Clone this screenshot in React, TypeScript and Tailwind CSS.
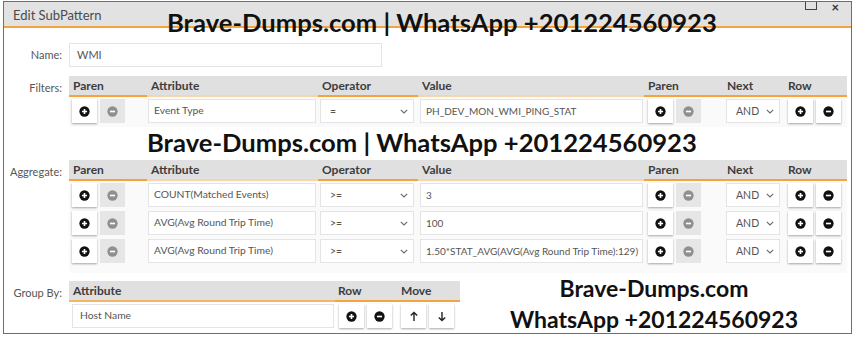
import React from "react";

const ui = { fontFamily: "Lato, 'Noto Sans', sans-serif" };
const wm = { fontFamily: "Lato, 'Open Sans', sans-serif" };

function PlusIcon({ color = "#111" }: { color?: string }) {
  return (
    <svg width="11" height="11" viewBox="0 0 12 12">
      <circle cx="6" cy="6" r="5.6" fill={color} />
      <path d="M6 3.2v5.6M3.2 6h5.6" stroke="#fff" strokeWidth="1.8" />
    </svg>
  );
}
function MinusIcon({ color = "#111" }: { color?: string }) {
  return (
    <svg width="11" height="11" viewBox="0 0 12 12">
      <circle cx="6" cy="6" r="5.6" fill={color} />
      <path d="M3.2 6h5.6" stroke="#fff" strokeWidth="1.8" />
    </svg>
  );
}
function ArrowIcon({ up }: { up: boolean }) {
  return (
    <svg width="10" height="11" viewBox="0 0 10 11">
      {up ? (
        <path d="M5 10V1.5M1.8 4.6L5 1.4l3.2 3.2" stroke="#222" strokeWidth="1.4" fill="none" />
      ) : (
        <path d="M5 1v8.5M1.8 6.4L5 9.6l3.2-3.2" stroke="#222" strokeWidth="1.4" fill="none" />
      )}
    </svg>
  );
}
function Chevron() {
  return (
    <svg width="8" height="5" viewBox="0 0 8 5">
      <path d="M0.8 0.8L4 4l3.2-3.2" stroke="#666" strokeWidth="1.1" fill="none" />
    </svg>
  );
}

function Btn({ children, disabled }: { children: React.ReactNode; disabled?: boolean }) {
  return (
    <div
      className={
        disabled
          ? "w-[25px] h-[24px] flex items-center justify-center bg-[#e6e6e6]"
          : "w-[25px] h-[24px] flex items-center justify-center bg-white shadow-[0_1px_2px_rgba(0,0,0,0.35)]"
      }
    >
      {children}
    </div>
  );
}

function Input({ text, className = "" }: { text: string; className?: string }) {
  return (
    <div
      className={
        "h-[24px] bg-white border border-[#e4e4e4] flex items-center pl-[5px] text-[10.3px] text-[#555] whitespace-nowrap overflow-hidden " +
        className
      }
    >
      {text}
    </div>
  );
}

function Select({ text, className = "" }: { text: string; className?: string }) {
  return (
    <div
      className={
        "h-[24px] bg-white border border-[#e4e4e4] flex items-center justify-between pl-[9px] pr-[5px] text-[10.5px] text-[#555] " +
        className
      }
    >
      <span className="leading-[22px]">{text}</span>
      <Chevron />
    </div>
  );
}

const cols = "grid grid-cols-[78px_171px_100px_226px_79px_61px_63px]";

function HeaderRow({ names }: { names: string[] }) {
  const strong = [true, false, true, false, true, true, true];
  return (
    <div className={cols + " h-[21px] bg-[#e0e0e0]"}>
      {names.map((n, i) => (
        <div
          key={i}
          className={
            "flex items-center pl-[4px] text-[12px] font-bold text-[#3d3d3d] border-b-2 " +
            (strong[i] ? "border-[#f4a43a]" : "border-[#f3d6ad]")
          }
        >
          {n}
        </div>
      ))}
    </div>
  );
}

function DataRow({ attr, op, val }: { attr: string; op: string; val: string }) {
  return (
    <div className={cols + " h-[24px]"}>
      <div className="flex gap-[3px] pl-[3px]">
        <Btn><PlusIcon /></Btn>
        <Btn disabled><MinusIcon color="#8f8f8f" /></Btn>
      </div>
      <div className="pl-[1px] pr-[2px]"><Input text={attr} /></div>
      <div className="pl-[2px] pr-[4px]"><Select text={op} /></div>
      <div className="pl-[2px] pr-[1px]"><Input text={val} className="pl-[4px] text-[10px]" /></div>
      <div className="flex gap-[3px] pl-[4px]">
        <Btn><PlusIcon /></Btn>
        <Btn disabled><MinusIcon color="#8f8f8f" /></Btn>
      </div>
      <div className="pl-[3px] pr-[4px]"><Select text="AND" /></div>
      <div className="flex gap-[3px] pl-[4px]">
        <Btn><PlusIcon /></Btn>
        <Btn><MinusIcon /></Btn>
      </div>
    </div>
  );
}

function Label({ text, className = "" }: { text: string; className?: string }) {
  return (
    <div className={"w-[65px] shrink-0 text-right pr-[7px] text-[11px] text-[#555] " + className}>{text}</div>
  );
}

const headers = ["Paren", "Attribute", "Operator", "Value", "Paren", "Next", "Row"];

export default function App() {
  return (
    <div className="w-[854px] h-[338px] bg-white relative overflow-hidden" style={ui}>
      <div className="absolute left-[3px] top-[1px] w-[849px] h-[333px] border border-[#6e6e6e] flex flex-col">
        {/* title bar */}
        <div className="h-[26px] shrink-0 bg-[#e2e2e2] border-b-2 border-[#f4a43a] flex items-start justify-between pl-[9px] pr-[12px]">
          <span className="text-[13px] text-[#4a4a4a] mt-[4px]">Edit SubPattern</span>
          <div className="flex items-start gap-[14px]">
            <div className="w-[12px] h-[8px] border-[1.5px] border-t-0 border-[#444]"></div>
            <span className="text-[13px] font-bold text-[#333] leading-[10px]">×</span>
          </div>
        </div>

        {/* Name */}
        <div className="flex items-center mt-[15px]">
          <Label text="Name:" />
          <Input text="WMI" className="w-[313px] pl-[7px] text-[11px]" />
        </div>

        {/* Filters */}
        <div className="flex mt-[9px]">
          <Label text="Filters:" className="pt-[4px]" />
          <div className="w-[778px] bg-[#fafafa]">
            <HeaderRow names={headers} />
            <div className="pt-[2px] pb-[4px] flex flex-col gap-[4px] bg-[#fafafa]">
              <DataRow attr="Event Type" op="=" val="PH_DEV_MON_WMI_PING_STAT" />
            </div>
            <div className="h-[29px] bg-white"></div>
          </div>
        </div>

        {/* Aggregate */}
        <div className="flex mt-[4px]">
          <Label text="Aggregate:" className="pt-[4px]" />
          <div className="w-[778px] bg-[#fafafa]">
            <HeaderRow names={headers} />
            <div className="pt-[2px] pb-[10px] flex flex-col gap-[4px]">
              <DataRow attr="COUNT(Matched Events)" op=">=" val="3" />
              <DataRow attr="AVG(Avg Round Trip Time)" op=">=" val="100" />
              <DataRow attr="AVG(Avg Round Trip Time)" op=">=" val="1.50*STAT_AVG(AVG(Avg Round Trip Time):129)" />
            </div>
          </div>
        </div>

        {/* Group By */}
        <div className="flex mt-[8px]">
          <Label text="Group By:" className="pt-[4px]" />
          <div className="w-[391px]">
            <div className="grid grid-cols-[266px_65px_60px] h-[21px] bg-[#e0e0e0]">
              <div className="flex items-center pl-[4px] text-[12px] font-bold text-[#3d3d3d] border-b-2 border-[#f4b566]">Attribute</div>
              <div className="flex items-center pl-[3px] text-[12px] font-bold text-[#3d3d3d] border-b-2 border-[#f4a43a]">Row</div>
              <div className="flex items-center pl-[1px] text-[12px] font-bold text-[#3d3d3d] border-b-2 border-[#f4a43a]">Move</div>
            </div>
            <div className="grid grid-cols-[266px_65px_60px] h-[24px] mt-[2px]">
              <div className="pl-[3px] pr-[1px]"><Input text="Host Name" className="pl-[7px]" /></div>
              <div className="flex gap-[3px] pl-[4px]">
                <Btn><PlusIcon /></Btn>
                <Btn><MinusIcon /></Btn>
              </div>
              <div className="flex gap-[3px] pl-[1px]">
                <Btn><ArrowIcon up /></Btn>
                <Btn><ArrowIcon up={false} /></Btn>
              </div>
            </div>
          </div>
        </div>
      </div>

      {/* watermarks */}
      <div className="absolute left-[167px] top-[7px] text-[25.6px] font-bold text-[#111] whitespace-nowrap leading-[30px]" style={wm}>
        Brave-Dumps.com | WhatsApp +201224560923
      </div>
      <div className="absolute left-[147px] top-[127px] text-[25.6px] font-bold text-[#111] whitespace-nowrap leading-[30px]" style={wm}>
        Brave-Dumps.com | WhatsApp +201224560923
      </div>
      <div className="absolute left-[512px] top-[273px] w-[284px] flex flex-col items-center text-[23px] font-bold text-[#111] whitespace-nowrap leading-[31px]" style={wm}>
        <span>Brave-Dumps.com</span>
        <span>WhatsApp +201224560923</span>
      </div>
    </div>
  );
}
